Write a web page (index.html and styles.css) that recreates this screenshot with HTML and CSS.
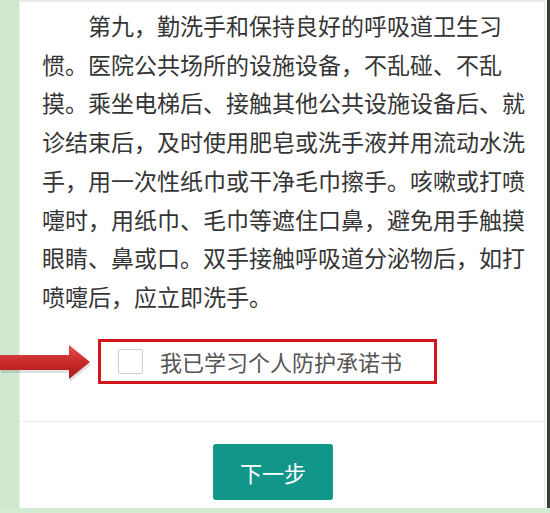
FILE: index.html
```html
<!DOCTYPE html>
<html lang="zh-CN">
<head>
<meta charset="utf-8">
<link rel="stylesheet" href="styles.css">
</head>
<body>
<div class="frame">
  <div class="row">
    <div class="strip"></div>
    <div class="panel">
      <p class="article">第九，勤洗手和保持良好的呼吸道卫生习<br>惯。医院公共场所的设施设备，不乱碰、不乱<br>摸。乘坐电梯后、接触其他公共设施设备后、就<br>诊结束后，及时使用肥皂或洗手液并用流动水洗<br>手，用一次性纸巾或干净毛巾擦手。咳嗽或打喷<br>嚏时，用纸巾、毛巾等遮住口鼻，避免用手触摸<br>眼睛、鼻或口。双手接触呼吸道分泌物后，如打<br>喷嚏后，应立即洗手。</p>
      <label class="agree">
        <span class="check"></span>
        <span class="agree-text">我已学习个人防护承诺书</span>
      </label>
      <div class="divider"></div>
      <button class="next">下一步</button>
    </div>
    <div class="edge"></div>
  </div>
  <div class="bottom"></div>
  <svg class="arrow" width="92" height="40" viewBox="0 0 92 40">
    <defs>
      <linearGradient id="ag" x1="0" y1="0" x2="0" y2="1">
        <stop offset="0" stop-color="#e0504f"/>
        <stop offset="0.5" stop-color="#c92a2a"/>
        <stop offset="1" stop-color="#a81c1c"/>
      </linearGradient>
    </defs>
    <polygon points="0,10 69,10 69,0 90,17 69,34 69,25 0,25" fill="#000" opacity="0.12" transform="translate(1,3)"/>
    <polygon points="0,10 69,10 69,0 90,17 69,34 69,25 0,25" fill="url(#ag)"/>
  </svg>
</div>
</body>
</html>
```

FILE: styles.css
```css
html, body {
  margin: 0;
  padding: 0;
  background: #ffffff;
}
body {
  width: 550px;
  height: 513px;
  overflow: hidden;
  font-family: "Noto Sans CJK SC", "Noto Sans", sans-serif;
}
.frame {
  position: relative;
  display: flex;
  flex-direction: column;
  width: 550px;
  height: 513px;
}
.row {
  display: flex;
  height: 508px;
}
.strip {
  width: 19px;
  background: #cfe8cf;
  border-right: 1px solid #e8f3e8;
}
.panel {
  width: 524px;
  border-top: 2px solid #e7ebe8;
  border-right: 1px solid #e4eee4;
  display: flex;
  flex-direction: column;
  background: #ffffff;
}
.edge {
  width: 5px;
  background: linear-gradient(to right, #f4f8f4 0, #f4f8f4 2px, #3b3b3b 2px);
}
.bottom {
  height: 5px;
  background: #d3ead3;
}
.article {
  margin: 4px 0 0 0;
  padding-left: 22px;
  width: 495px;
  font-size: 23px;
  line-height: 38.7px;
  color: #353535;
  text-indent: 46px;
  white-space: nowrap;
}
.agree {
  margin-top: 23px;
  margin-left: 78px;
  width: 333px;
  height: 39px;
  border: 3px solid #d2141c;
  display: flex;
  align-items: center;
  padding-left: 17px;
  box-sizing: content-box;
  width: 316px;
}
.check {
  width: 23px;
  height: 23px;
  border: 1px solid #cfcfcf;
  border-radius: 2px;
  background: #fff;
  flex: none;
}
.agree-text {
  margin-left: 17px;
  font-size: 22px;
  color: #555555;
  line-height: 30px;
}
.divider {
  margin-top: 37px;
  height: 1px;
  background: #ededed;
}
.next {
  margin-top: 22px;
  margin-left: 193px;
  width: 120px;
  height: 56px;
  border: none;
  border-radius: 3px;
  background: #12968a;
  color: #ffffff;
  font-family: "Noto Sans CJK SC", "Noto Sans", sans-serif;
  font-size: 22px;
  padding: 0;
}
.arrow {
  position: absolute;
  left: 0;
  top: 345px;
}
```
